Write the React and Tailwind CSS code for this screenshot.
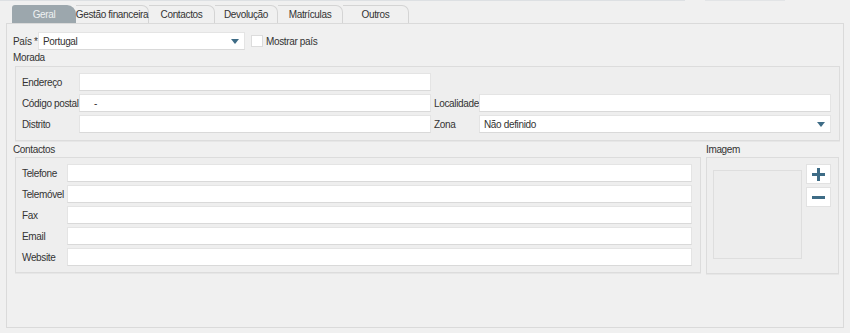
import React from 'react';

const font = { fontFamily: '"Liberation Sans", Arial, sans-serif' };

function Arrow() {
  return (
    <svg width="8" height="5" viewBox="0 0 8 5" className="shrink-0">
      <path d="M0 0 H8 L4 5 Z" fill="#3e6c86" />
    </svg>
  );
}

function Input({ className = '', children }) {
  return (
    <div
      className={`h-[18px] shrink-0 bg-white border border-[#e4e4e4] border-b-[#d9d9d9] flex items-center px-[4px] ${className}`}
    >
      {children}
    </div>
  );
}

function Select({ value, className = '' }) {
  return (
    <Input className={`justify-between pr-[5px] ${className}`}>
      <span>{value}</span>
      <Arrow />
    </Input>
  );
}

const tabs = [
  { label: 'Geral', w: 'w-[64px]' },
  { label: 'Gestão financeira', w: 'w-[73px]' },
  { label: 'Contactos', w: 'w-[66px]' },
  { label: 'Devolução', w: 'w-[63px]' },
  { label: 'Matrículas', w: 'w-[65px]' },
  { label: 'Outros', w: 'w-[66px]' },
];

function Tabs() {
  return (
    <div className="flex pl-[12px] h-[18px] mt-[4px]">
      {tabs.map((t, i) =>
        i === 0 ? (
          <div
            key={t.label}
            className={`${t.w} h-full bg-[#9ca7ad] rounded-tl-[3px] rounded-tr-[9px] flex items-center justify-center text-[#eef1f2]`}
          >
            {t.label}
          </div>
        ) : (
          <div
            key={t.label}
            className={`${t.w} h-full border-t border-r border-[#d4d4d4] rounded-tr-[7px] flex items-center justify-center`}
          >
            {t.label}
          </div>
        )
      )}
    </div>
  );
}

function Group({ className = '', children }) {
  return (
    <div className={`border border-[#dcdcdc] bg-[#eeeeee] shadow-[0_1px_0_#e6e6e6] ${className}`}>
      {children}
    </div>
  );
}

function IconButton({ minus }) {
  return (
    <div className="w-[25px] h-[20px] bg-white border border-[#e2e2e2] flex items-center justify-center">
      <svg width="13" height="13" viewBox="0 0 13 13">
        {!minus && <rect x="5" y="0" width="3" height="13" fill="#3e6c86" />}
        <rect x="0" y="5" width="13" height="3" fill="#3e6c86" />
      </svg>
    </div>
  );
}

export default function App() {
  const contactRows = ['Telefone', 'Telemóvel', 'Fax', 'Email', 'Website'];

  return (
    <div
      className="w-[850px] h-[333px] bg-[#f0f0f0] overflow-hidden text-[#333] text-[10px] tracking-[-0.35px] whitespace-nowrap"
      style={font}
    >
      <div className="flex h-px">
        <div className="w-[685px] bg-[#dde0e3]" />
        <div className="w-[80px] ml-[20px] bg-[#e2e4e6]" />
      </div>

      <Tabs />

      <div className="mx-[6px] h-[305px] border border-[#dadada] pt-[8px]">
        {/* País */}
        <div className="flex items-center h-[18px] pl-[6px]">
          <span className="w-[25px] shrink-0">País *</span>
          <Select value="Portugal" className="w-[207px]" />
          <div className="w-[12px] h-[12px] bg-white border border-[#dcdcdc] ml-[6px]" />
          <span className="ml-[3px]">Mostrar país</span>
        </div>

        <div className="pl-[6px] h-[15px] leading-[15px]">Morada</div>

        <Group className="ml-[8px] w-[825px] mt-[1px] pt-[6px] pb-[7px] pl-[6px] pr-[7px] flex flex-col gap-[3px]">
          <div className="flex items-center">
            <span className="w-[57px] shrink-0">Endereço</span>
            <Input className="w-[352px]" />
          </div>
          <div className="flex items-center">
            <span className="w-[57px] shrink-0">Código postal</span>
            <Input className="w-[352px] pl-[14px]">-</Input>
            <span className="w-[45px] shrink-0 ml-[3px]">Localidade</span>
            <Input className="w-[352px]" />
          </div>
          <div className="flex items-center">
            <span className="w-[57px] shrink-0">Distrito</span>
            <Input className="w-[352px]" />
            <span className="w-[45px] shrink-0 ml-[3px]">Zona</span>
            <Select value="Não definido" className="w-[352px]" />
          </div>
        </Group>

        <div className="flex ml-[6px] mt-[1px]">
          <div className="w-[693px]">
            <div className="h-[15px] leading-[15px]">Contactos</div>
            <Group className="ml-[2px] w-[686px] pt-[6px] pb-[6px] pl-[6px] pr-[7px] flex flex-col gap-[3px]">
              {contactRows.map((r) => (
                <div key={r} className="flex items-center">
                  <span className="w-[45px] shrink-0">{r}</span>
                  <Input className="w-[625px]" />
                </div>
              ))}
            </Group>
          </div>
          <div className="w-[133px]">
            <div className="h-[15px] leading-[15px]">Imagem</div>
            <Group className="w-[133px] h-[117px] flex pl-[6px] pt-[6px]">
              <div className="w-[89px] h-[89px] mt-[6px] border border-[#dedede] bg-[#ededed]" />
              <div className="flex flex-col gap-[3px] ml-[4px]">
                <IconButton />
                <IconButton minus />
              </div>
            </Group>
          </div>
        </div>
      </div>
    </div>
  );
}
